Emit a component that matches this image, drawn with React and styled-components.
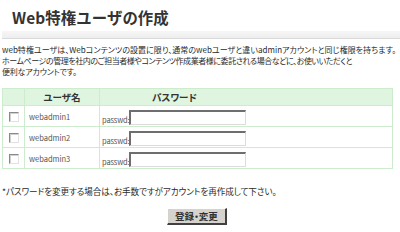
import React from "react";
import styled, { createGlobalStyle } from "styled-components";

const Global = createGlobalStyle`
  html, body { margin: 0; padding: 0; background: #fff; }
  body {
    font-family: "Noto Sans CJK JP", "Noto Sans", sans-serif;
    color: #333;
    width: 400px;
    height: 232px;
    overflow: hidden;
  }
`;

const Page = styled.div`
  display: flex;
  flex-direction: column;
  width: 400px;
`;

const Title = styled.h1`
  margin: 0;
  padding: 6px 0 0 12px;
  height: 25px;
  font-size: 15.4px;
  font-weight: 700;
  line-height: 22px;
  color: #333;
  letter-spacing: 0.1px;
`;

const Bar = styled.div`
  margin-left: 2px;
  height: 7px;
  background: linear-gradient(#f6f6f6, #eeeeee);
  border-bottom: 1px solid #d9d9d9;
`;

const Intro = styled.p`
  margin: 5px 0 0 2px;
  font-size: 8px;
  line-height: 11px;
  color: #2a2a2a;
  font-feature-settings: "palt";
`;

const Line = styled.span`
  display: block;
  white-space: nowrap;
  letter-spacing: ${p => p.$ls || 0}px;
`;

const Table = styled.table`
  margin: 11px 0 0 2px;
  width: 391px;
  border-collapse: collapse;
  border: 1px solid #cdeccd;
`;

const Th = styled.th`
  height: 16px;
  padding: 0;
  background: #dff5df;
  border: 1px solid #cdeccd;
  font-size: 9.5px;
  font-weight: 700;
  color: #333;
  text-align: ${p => p.$align || "center"};
  padding-left: ${p => p.$pad || 0}px;
  line-height: 16px;
  font-feature-settings: "palt";
`;

const Td = styled.td`
  height: 20px;
  padding: 0;
  border: 1px solid #cdeccd;
  font-size: 7.5px;
  color: #555;
  vertical-align: middle;
`;

const CheckCell = styled(Td)`
  width: 21px;
  text-align: center;
`;

const NameCell = styled(Td)`
  width: 70px;
  padding-left: 4px;
`;

const Check = styled.span`
  display: inline-block;
  width: 8px;
  height: 8px;
  margin-top: 2px;
  border-top: 1px solid #8a8a8a;
  border-left: 1px solid #8a8a8a;
  border-right: 1px solid #e2e2e2;
  border-bottom: 1px solid #e2e2e2;
  box-shadow: inset 1px 1px 0 #d0d0d0;
  background: #fff;
  vertical-align: middle;
`;

const PassWrap = styled.div`
  display: flex;
  align-items: flex-end;
  padding-left: 2px;
  height: 20px;
  padding-top: 1px;
  box-sizing: border-box;
`;

const PassLabel = styled.span`
  font-size: 7.5px;
  color: #555;
  line-height: 10px;
  padding-bottom: 1px;
  letter-spacing: -0.15px;
`;

const PassInput = styled.input`
  box-sizing: border-box;
  width: 117px;
  height: 15px;
  margin: 0 0 1px 0;
  padding: 0;
  border-top: 2px solid #6e6e6e;
  border-left: 2px solid #6e6e6e;
  border-right: 1px solid #dcdcdc;
  border-bottom: 1px solid #dcdcdc;
  background: #fff;
  outline: none;
`;

const Note = styled.p`
  margin: 17px 0 0 2px;
  font-size: 8.6px;
  line-height: 11px;
  color: #2a2a2a;
  font-feature-settings: "palt";
  letter-spacing: -0.1px;
  white-space: nowrap;
`;

const ButtonRow = styled.div`
  display: flex;
  justify-content: center;
  margin-top: 11px;
  padding-right: 6px;
`;

const Button = styled.button`
  box-sizing: border-box;
  width: 60px;
  height: 17px;
  padding: 0;
  background: #d6d3ce;
  border-top: 1px solid #ffffff;
  border-left: 1px solid #ffffff;
  border-right: 2px solid #404040;
  border-bottom: 2px solid #404040;
  font-family: "Noto Sans CJK JP", sans-serif;
  font-size: 9.5px;
  font-weight: 700;
  color: #333;
  line-height: 13px;
  font-feature-settings: "palt";
`;

const users = ["webadmin1", "webadmin2", "webadmin3"];

export default function App() {
  return (
    <Page>
      <Global />
      <Title>Web特権ユーザの作成</Title>
      <Bar />
      <Intro>
        <Line $ls={0.03}>web特権ユーザは、Webコンテンツの設置に限り、通常のwebユーザと違いadminアカウントと同じ権限を持ちます。</Line>
        <Line $ls={-0.45}>ホームページの管理を社内のご担当者様やコンテンツ作成業者様に委託される場合などに、お使いいただくと</Line>
        <Line $ls={-0.2}>便利なアカウントです。</Line>
      </Intro>
      <Table>
        <thead>
          <tr>
            <Th></Th>
            <Th>ユーザ名</Th>
            <Th $align="left" $pad={52}>パスワード</Th>
          </tr>
        </thead>
        <tbody>
          {users.map(u => (
            <tr key={u}>
              <CheckCell><Check /></CheckCell>
              <NameCell>{u}</NameCell>
              <Td>
                <PassWrap>
                  <PassLabel>passwd:</PassLabel>
                  <PassInput type="password" />
                </PassWrap>
              </Td>
            </tr>
          ))}
        </tbody>
      </Table>
      <Note>*パスワードを変更する場合は、お手数ですがアカウントを再作成して下さい。</Note>
      <ButtonRow>
        <Button>登録・変更</Button>
      </ButtonRow>
    </Page>
  );
}
